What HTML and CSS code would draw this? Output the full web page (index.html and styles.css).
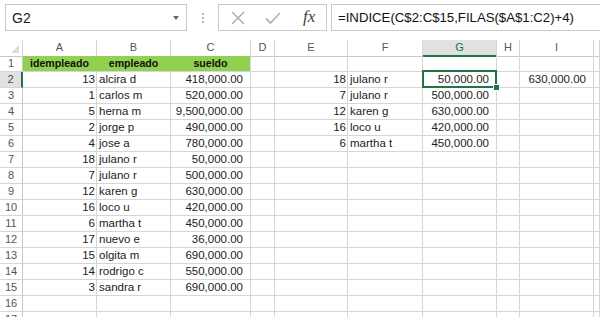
FILE: index.html
```html
<!DOCTYPE html><html><head><meta charset="utf-8"/>
<title>Libro1 - Excel</title>
<link rel="stylesheet" href="styles.css">
</head>
<body>

<div class="toolbar">
	<div class="namebox">G2<span class="drop"></span></div>
	<div class="grip"><i></i><i></i><i></i></div>
	<div class="buttons">
		<svg class="icon" width="14" height="14" viewBox="0 0 14 14"><path d="M1 1L13 13M13 1L1 13" stroke="#a9a9a9" stroke-width="1.4" fill="none"/></svg>
		<svg class="icon" width="16" height="14" viewBox="0 0 16 14"><path d="M1 7.5L5.5 12L15 2" stroke="#b4b4b4" stroke-width="1.8" fill="none"/></svg>
		<span class="fx">fx</span>
	</div>
	<div class="formula">=INDICE(C$2:C$15,FILAS($A$1:C2)+4)</div>
</div>

<div class="sheet">
	<div class="row head"><span class="corner"></span><span>A</span><span>B</span><span>C</span><span>D</span><span>E</span><span>F</span><span class="on">G</span><span>H</span><span>I</span><span></span></div>
	<div class="row"><span class="rh">1</span><span class="title">idempleado</span><span class="title">empleado</span><span class="title">sueldo</span><span></span><span></span><span></span><span></span><span></span><span></span><span></span></div>
	<div class="row"><span class="rh on">2</span><span class="n">13</span><span class="t">alcira d</span><span class="m">418,000.00</span><span></span><span class="n">18</span><span class="t">julano r</span><span class="m sel">50,000.00</span><span></span><span class="m">630,000.00</span><span></span></div>
	<div class="row"><span class="rh">3</span><span class="n">1</span><span class="t">carlos m</span><span class="m">520,000.00</span><span></span><span class="n">7</span><span class="t">julano r</span><span class="m">500,000.00</span><span></span><span></span><span></span></div>
	<div class="row"><span class="rh">4</span><span class="n">5</span><span class="t">herna m</span><span class="m">9,500,000.00</span><span></span><span class="n">12</span><span class="t">karen g</span><span class="m">630,000.00</span><span></span><span></span><span></span></div>
	<div class="row"><span class="rh">5</span><span class="n">2</span><span class="t">jorge p</span><span class="m">490,000.00</span><span></span><span class="n">16</span><span class="t">loco u</span><span class="m">420,000.00</span><span></span><span></span><span></span></div>
	<div class="row"><span class="rh">6</span><span class="n">4</span><span class="t">jose a</span><span class="m">780,000.00</span><span></span><span class="n">6</span><span class="t">martha t</span><span class="m">450,000.00</span><span></span><span></span><span></span></div>
	<div class="row"><span class="rh">7</span><span class="n">18</span><span class="t">julano r</span><span class="m">50,000.00</span><span></span><span></span><span></span><span></span><span></span><span></span><span></span></div>
	<div class="row"><span class="rh">8</span><span class="n">7</span><span class="t">julano r</span><span class="m">500,000.00</span><span></span><span></span><span></span><span></span><span></span><span></span><span></span></div>
	<div class="row"><span class="rh">9</span><span class="n">12</span><span class="t">karen g</span><span class="m">630,000.00</span><span></span><span></span><span></span><span></span><span></span><span></span><span></span></div>
	<div class="row"><span class="rh">10</span><span class="n">16</span><span class="t">loco u</span><span class="m">420,000.00</span><span></span><span></span><span></span><span></span><span></span><span></span><span></span></div>
	<div class="row"><span class="rh">11</span><span class="n">6</span><span class="t">martha t</span><span class="m">450,000.00</span><span></span><span></span><span></span><span></span><span></span><span></span><span></span></div>
	<div class="row"><span class="rh">12</span><span class="n">17</span><span class="t">nuevo e</span><span class="m">36,000.00</span><span></span><span></span><span></span><span></span><span></span><span></span><span></span></div>
	<div class="row"><span class="rh">13</span><span class="n">15</span><span class="t">olgita m</span><span class="m">690,000.00</span><span></span><span></span><span></span><span></span><span></span><span></span><span></span></div>
	<div class="row"><span class="rh">14</span><span class="n">14</span><span class="t">rodrigo c</span><span class="m">550,000.00</span><span></span><span></span><span></span><span></span><span></span><span></span><span></span></div>
	<div class="row"><span class="rh">15</span><span class="n">3</span><span class="t">sandra r</span><span class="m">690,000.00</span><span></span><span></span><span></span><span></span><span></span><span></span><span></span></div>
	<div class="row"><span class="rh">16</span><span></span><span></span><span></span><span></span><span></span><span></span><span></span><span></span><span></span><span></span></div>
	<div class="row"><span class="rh">17</span><span></span><span></span><span></span><span></span><span></span><span></span><span></span><span></span><span></span><span></span></div>
</div>

</body>
</html>
```

FILE: styles.css
```css
body {
	margin: 0;
	font-family: "Liberation Sans", Arial, sans-serif;
	background-color: white;
	color: #222;
	overflow: hidden;
}
/* formula bar */
.toolbar {
	display: flex;
	align-items: flex-start;
	height: 40px;
	padding: 4px 0 0 5px;
	box-sizing: border-box;
}
.namebox, .buttons, .formula {
	height: 27px;
	box-sizing: border-box;
	border: 1px solid #c9c9c9;
	display: flex;
	align-items: center;
}
.namebox {
	width: 182px;
	padding-left: 6px;
	font-size: 14px;
	position: relative;
}
.drop {
	position: absolute;
	right: 7px;
	top: 11px;
	border-left: 3px solid transparent;
	border-right: 3px solid transparent;
	border-top: 4px solid #666;
}
.grip {
	width: 31px;
	display: flex;
	flex-direction: column;
	align-items: center;
	gap: 2px;
	padding-top: 9px;
}
.grip i {
	width: 2px;
	height: 2px;
	background-color: #b8b8b8;
}
.buttons {
	width: 109px;
	padding-left: 12px;
	gap: 0;
}
.buttons .icon {
	margin-right: 20px;
}
.buttons .icon + .icon {
	margin-right: 22px;
}
.fx {
	font-family: "Liberation Serif", serif;
	font-style: italic;
	font-size: 17px;
	color: #444;
	margin-top: -2px;
}
.formula {
	flex: 1;
	margin-left: 4px;
	border-right: none;
	padding-left: 6px;
	font-size: 13.2px;
	color: #111;
}
/* grid */
.row {
	display: grid;
	grid-template-columns: 23px 74px 74px 80px 24px 73px 75px 74px 23px 74px 1fr;
	height: 16px;
	font-size: 11.5px;
}
.row span {
	box-sizing: border-box;
	border-right: 1px solid #d6d6d6;
	border-bottom: 1px solid #d6d6d6;
	line-height: 15px;
	white-space: nowrap;
	overflow: visible;
	position: relative;
}
.row .rh {
	text-align: center;
	color: #555;
	font-size: 11px;
	border-right-color: #c8c8c8;
}
.row .rh.on {
	background-color: #e1e1e1;
	border-right: 2px solid #217346;
	color: #2f5a3e;
}
.head span {
	text-align: center;
	color: #555;
	font-size: 11px;
	border-bottom-color: #c8c8c8;
}
.head .on {
	background-color: #e1e1e1;
	border-bottom: 2px solid #217346;
	color: #217346;
	line-height: 15px;
}
.corner::after {
	content: "";
	position: absolute;
	right: 3px;
	bottom: 3px;
	border-left: 8px solid transparent;
	border-bottom: 8px solid #dcdcdc;
}
.row .title {
	background-color: #92d050;
	border-right-color: #92d050;
	font-weight: bold;
	font-size: 10.6px;
	text-align: center;
	color: #111;
}
.row .title:nth-child(4) {
	border-right-color: #d6d6d6;
}
.n {
	text-align: right;
	padding-right: 1px;
}
.t {
	padding-left: 2px;
}
.m {
	text-align: right;
	padding-right: 7px;
}
/* active cell */
.sel::after {
	content: "";
	position: absolute;
	left: -1px;
	top: -2px;
	right: -1px;
	bottom: -1px;
	border: 2px solid #217346;
}
.sel::before {
	content: "";
	position: absolute;
	right: -4px;
	bottom: -4px;
	width: 5px;
	height: 5px;
	background-color: #217346;
	border: 1px solid white;
	z-index: 1;
}
```
